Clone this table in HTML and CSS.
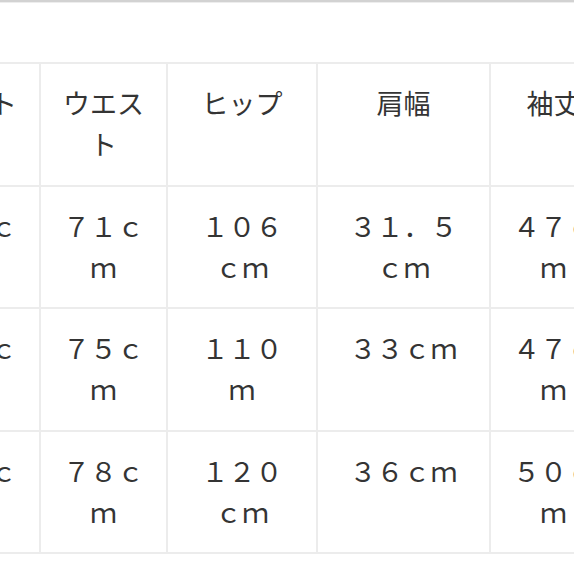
FILE: index.html
```html
<!DOCTYPE html>
<html lang="ja">
<head>
<meta charset="utf-8">
<title>サイズ表</title>
<link rel="stylesheet" href="styles.css">
</head>
<body>
<div class="topbar"></div>
<div class="wrap">
  <table class="size">
    <colgroup>
      <col class="c-narrow">
      <col class="c-narrow">
      <col class="c-mid">
      <col class="c-wide">
      <col class="c-narrow">
    </colgroup>
    <tr><th>バスト</th><th>ウエスト</th><th>ヒップ</th><th>肩幅</th><th>袖丈</th></tr>
    <tr><td>８８ｃｍ</td><td>７１ｃｍ</td><td>１０６ｃｍ</td><td>３１．５ｃｍ</td><td>４７ｃｍ</td></tr>
    <tr><td>９２ｃｍ</td><td>７５ｃｍ</td><td>１１０ｍ</td><td>３３ｃｍ</td><td>４７ｃｍ</td></tr>
    <tr><td>９６ｃｍ</td><td>７８ｃｍ</td><td>１２０ｃｍ</td><td>３６ｃｍ</td><td>５０ｃｍ</td></tr>
  </table>
</div>
</body>
</html>
```

FILE: styles.css
```css
html, body {
  margin: 0;
  padding: 0;
  background: #ffffff;
  overflow: hidden;
}
body {
  width: 574px;
  height: 574px;
  font-family: "Noto Sans CJK JP", "Noto Sans", sans-serif;
  color: #343434;
}
.topbar {
  height: 2px;
  background: #d2d2d2;
  border-bottom: 1px solid #ededed;
}
.wrap {
  width: 574px;
  overflow: hidden;
  padding-top: 59px;
}
.size {
  table-layout: fixed;
  border-collapse: collapse;
  width: 704px;
  margin-left: -88px;
}
.c-narrow { width: 127px; }
.c-mid { width: 150px; }
.c-wide { width: 173px; }
.size th,
.size td {
  box-sizing: border-box;
  height: 122.5px;
  border: 2px solid #ececec;
  padding: 18px 21px 0;
  vertical-align: top;
  text-align: center;
  font-size: 27px;
  line-height: 41px;
  font-weight: 400;
}
```
